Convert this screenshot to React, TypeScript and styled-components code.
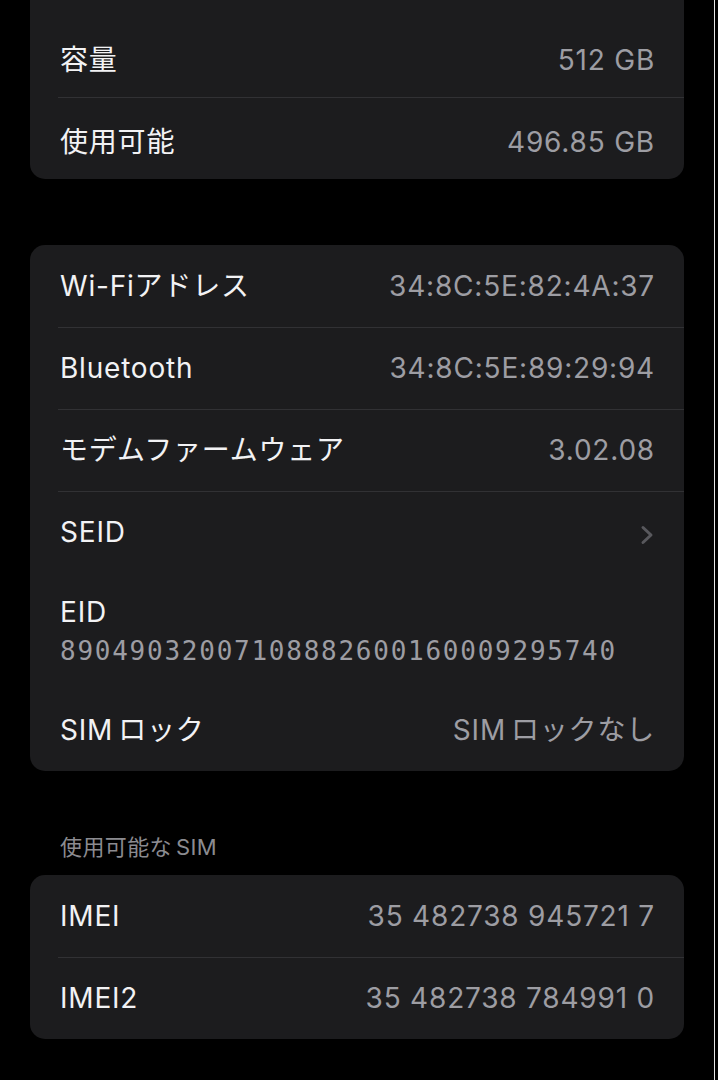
import { FC, ReactNode } from 'react';
import styled, { createGlobalStyle } from 'styled-components';

const GlobalStyle = createGlobalStyle`
  html, body {
    margin: 0;
    padding: 0;
    background: #000;
  }
  body {
    font-family: Inter, "Noto Sans CJK JP", sans-serif;
    -webkit-font-smoothing: antialiased;
  }
`;

const Screen = styled.div`
  width: 715px;
  height: 1080px;
  box-sizing: border-box;
  padding: 0 30px;
  border-right: 1px solid #e6e6e6;
  overflow: hidden;
`;

const Card = styled.div<{ $top: number }>`
  margin-top: ${(props) => props.$top}px;
  background: #1c1c1e;
  border-radius: 15px;
  overflow: hidden;
`;

// the list continues above the top of the screen
const ClippedCard = styled(Card)`
  padding-top: 82px;
`;

const Row = styled.div<{ $tall?: boolean; $shift?: number }>`
  position: relative;
  display: flex;
  align-items: center;
  justify-content: space-between;
  height: ${(props) => (props.$tall ? 116 : 82)}px;
  padding: ${(props) => props.$shift ?? 0}px 29px 0 30px;
  box-sizing: border-box;

  & + &::before {
    content: '';
    position: absolute;
    top: 0;
    left: 28px;
    right: 0;
    height: 1px;
    background: #313134;
  }
`;

const StackRow = styled(Row)`
  flex-direction: column;
  align-items: flex-start;
  justify-content: flex-start;
  padding-top: 22px;
  gap: 6px;
`;

const Label = styled.span`
  color: #f2f2f4;
  font-size: 28px;
  line-height: 34px;
  letter-spacing: 0.8px;
`;

const Value = styled.span`
  color: #9d9da3;
  font-size: 28px;
  line-height: 34px;
  letter-spacing: 0.8px;
`;

const Latin = styled.span<{ $gap: 'before' | 'after' }>`
  ${(props) => (props.$gap === 'after' ? 'margin-right: 5px;' : 'margin-left: 4px;')}
`;

const Code = styled.span`
  color: #9d9da3;
  font-family: "DejaVu Sans Mono", "Liberation Mono", monospace;
  font-size: 26px;
  line-height: 32px;
  letter-spacing: 1.75px;
`;

const SectionHeader = styled.div`
  margin: 62px 0 14px;
  padding-left: 30px;
  color: #8b8b90;
  font-size: 22px;
  line-height: 28px;
  letter-spacing: 0.4px;
`;

const Chevron = styled.svg`
  width: 14px;
  height: 20px;
  margin: 6px 1px 0 0;
`;

type Item = { label: ReactNode; value: ReactNode };

const storage = [
  { key: 'capacity', label: '容量', value: '512 GB' },
  { key: 'available', label: '使用可能', value: '496.85 GB' },
];

const network = [
  { key: 'wifi', label: 'Wi-Fiアドレス', value: '34:8C:5E:82:4A:37' },
  { key: 'bt', label: 'Bluetooth', value: '34:8C:5E:89:29:94' },
  { key: 'modem', label: 'モデムファームウェア', value: '3.02.08' },
];

const sims = [
  { key: 'imei', label: 'IMEI', value: '35 482738 945721 7' },
  { key: 'imei2', label: 'IMEI2', value: '35 482738 784991 0' },
];

const InfoRow: FC<Item & { shift?: number }> = ({ label, value, shift }) => (
  <Row $shift={shift}>
    <Label>{label}</Label>
    <Value>{value}</Value>
  </Row>
);

export default function App() {
  return (
    <>
      <GlobalStyle />
      <Screen>
        <ClippedCard $top={-67}>
          {storage.map((item) => (
            <InfoRow key={item.key} label={item.label} value={item.value} shift={7} />
          ))}
        </ClippedCard>

        <Card $top={66}>
          {network.map((item) => (
            <InfoRow key={item.key} label={item.label} value={item.value} />
          ))}
          <Row>
            <Label>SEID</Label>
            <Chevron viewBox="0 0 14 20" fill="none">
              <path d="M3 2.5l8 7.5-8 7.5" stroke="#58585d" strokeWidth="3" strokeLinecap="round" strokeLinejoin="round" />
            </Chevron>
          </Row>
          <StackRow $tall>
            <Label>EID</Label>
            <Code>89049032007108882600160009295740</Code>
          </StackRow>
          <InfoRow
            label={<><Latin $gap="after">SIM</Latin>ロック</>}
            value={<><Latin $gap="after">SIM</Latin>ロックなし</>}
          />
        </Card>

        <SectionHeader>
          使用可能な<Latin $gap="before">SIM</Latin>
        </SectionHeader>

        <Card $top={0}>
          {sims.map((item) => (
            <InfoRow key={item.key} label={item.label} value={item.value} />
          ))}
        </Card>
      </Screen>
    </>
  );
}
